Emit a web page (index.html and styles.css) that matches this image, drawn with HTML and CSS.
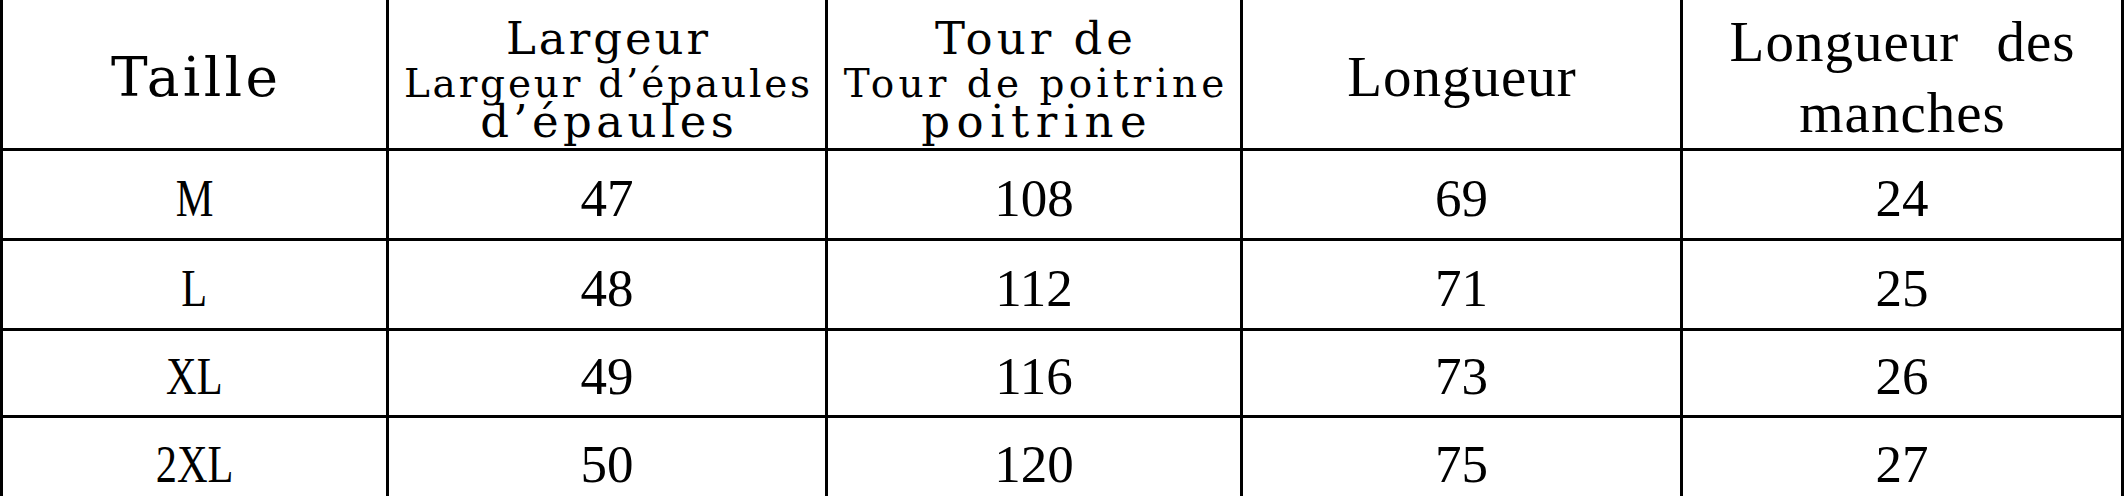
FILE: index.html
```html
<!DOCTYPE html>
<html lang="fr">
<head>
<meta charset="utf-8">
<title>Tableau des tailles</title>
<link rel="stylesheet" href="styles.css">
</head>
<body>
<div class="chart">
  <div class="cell head"><span class="line taille">Taille</span></div>
  <div class="cell head">
    <span class="line big first" style="--ls:3px">Largeur</span>
    <span class="line small" style="--ls:2.8px">Largeur d’épaules</span>
    <span class="line big last" style="--ls:4.4px">d’épaules</span>
  </div>
  <div class="cell head">
    <span class="line big first" style="--ls:4px">Tour de</span>
    <span class="line small" style="--ls:4.1px">Tour de poitrine</span>
    <span class="line big last" style="--ls:6.5px">poitrine</span>
  </div>
  <div class="cell head"><span class="line longueur">Longueur</span></div>
  <div class="cell head">
    <span class="line sleeve sleeve-top">Longueur des</span>
    <span class="line sleeve">manches</span>
  </div>

  <div class="cell data size"><span>M</span></div>
  <div class="cell data">47</div>
  <div class="cell data">108</div>
  <div class="cell data">69</div>
  <div class="cell data">24</div>

  <div class="cell data size"><span>L</span></div>
  <div class="cell data">48</div>
  <div class="cell data">112</div>
  <div class="cell data">71</div>
  <div class="cell data">25</div>

  <div class="cell data size"><span>XL</span></div>
  <div class="cell data">49</div>
  <div class="cell data">116</div>
  <div class="cell data">73</div>
  <div class="cell data">26</div>

  <div class="cell data size"><span>2XL</span></div>
  <div class="cell data">50</div>
  <div class="cell data">120</div>
  <div class="cell data">75</div>
  <div class="cell data">27</div>
</div>
</body>
</html>
```

FILE: styles.css
```css
html, body {
  margin: 0;
  padding: 0;
  background: #ffffff;
  overflow: hidden;
}

.chart {
  display: grid;
  grid-template-columns: 386px 439px 415px 440px 441px;
  grid-template-rows: 151px 90px 90px 87px 88px;
  width: 2124px;
  box-sizing: border-box;
  border-left: 3px solid #000;
  font-family: "Liberation Serif", "Times New Roman", serif;
  color: #000;
}

.cell {
  box-sizing: border-box;
  border-right: 3px solid #000;
  border-bottom: 3px solid #000;
  display: flex;
  flex-direction: column;
  align-items: center;
  justify-content: center;
  white-space: nowrap;
}

.head {
  padding-top: 6px;
}

.line {
  display: block;
  --ls: 0px;
  letter-spacing: var(--ls);
  margin-right: calc(-1 * var(--ls));
}

.taille,
.big,
.small {
  font-family: "DejaVu Serif", "Liberation Serif", serif;
}

.taille {
  font-size: 55px;
  line-height: 64px;
  --ls: 3.3px;
}

.big {
  font-size: 45px;
}

.big.first {
  line-height: 56px;
}

.big.last {
  line-height: 42px;
}

.small {
  font-size: 39px;
  line-height: 34px;
}

.longueur {
  font-size: 57px;
  line-height: 64px;
  --ls: 1px;
}

.sleeve {
  font-size: 57px;
  line-height: 71px;
  --ls: 1px;
}

.sleeve-top {
  word-spacing: 22px;
}

.data {
  font-size: 53px;
  line-height: 60px;
  padding-top: 6px;
}

.size span {
  display: inline-block;
  transform: scaleX(0.8);
}
```
